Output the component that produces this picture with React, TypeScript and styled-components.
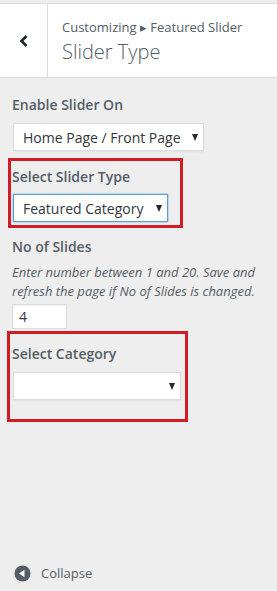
import styled, { createGlobalStyle } from "styled-components";

const GlobalStyle = createGlobalStyle`
  html, body {
    margin: 0;
    padding: 0;
    background: #eeeeee;
  }
  body {
    font-family: "Open Sans", "Liberation Sans", sans-serif;
    color: #555d66;
  }
`;

const Panel = styled.div`
  min-height: 100vh;
  display: flex;
  flex-direction: column;
  box-sizing: border-box;
  padding-top: 3px;
`;

const Header = styled.header`
  display: flex;
  height: 73px;
  background: #fff;
  border-top: 1px solid #dddddd;
  border-bottom: 1px solid #dddddd;
`;

const BackButton = styled.button`
  width: 48px;
  flex: none;
  display: flex;
  align-items: center;
  justify-content: center;
  padding: 0;
  background: #fff;
  border: none;
  border-right: 1px solid #dddddd;
  color: #23282d;
`;

const TitleBlock = styled.div`
  padding: 11px 0 0 14px;
`;

const Crumb = styled.div`
  font-size: 13px;
  line-height: 24px;
  color: #555d66;
`;

const Title = styled.h3`
  margin: 0;
  font-size: 20px;
  font-weight: 300;
  line-height: 26px;
  color: #555d66;
`;

const Body = styled.div`
  padding: 16px 12px 0 12px;
  flex: 1;
`;

const Label = styled.div`
  font-size: 14px;
  font-weight: 600;
  line-height: 21px;
  color: #555d66;
`;

const Description = styled.div`
  margin-top: 6px;
  font-size: 13px;
  font-style: italic;
  line-height: 19px;
  color: #555d66;
`;

const SelectBox = styled.div<{ $width: number; $focused?: boolean; $gap?: number }>`
  box-sizing: border-box;
  width: ${({ $width }) => $width}px;
  height: 28px;
  margin: ${({ $gap }) => $gap ?? 8}px 0 0 1px;
  display: flex;
  align-items: center;
  justify-content: space-between;
  padding: 0 5px 0 9px;
  background: #fff;
  border: 1px solid ${({ $focused }) => ($focused ? "#5b9dd9" : "#dddddd")};
  box-shadow: ${({ $focused }) =>
    $focused ? "0 0 2px rgba(30, 140, 190, 0.6)" : "0 1px 2px rgba(0,0,0,0.05)"};
  font-size: 14px;
  color: #32373c;
`;

const Arrow = styled.span`
  width: 0;
  height: 0;
  border-left: 3.5px solid transparent;
  border-right: 3.5px solid transparent;
  border-top: 7px solid #23282d;
`;

const Highlight = styled.div<{ $width: number; $top: number; $pad: string; $shift: number }>`
  box-sizing: border-box;
  width: ${({ $width }) => $width}px;
  margin: ${({ $top }) => $top}px 0 0 ${({ $shift }) => $shift}px;
  padding: ${({ $pad }) => $pad};
  border: 3px solid #d01c22;
`;

const NumberInput = styled.div`
  box-sizing: border-box;
  width: 55px;
  height: 25px;
  margin-top: 3px;
  padding: 0 6px;
  display: flex;
  align-items: center;
  background: #fff;
  border: 1px solid #dddddd;
  box-shadow: inset 0 1px 2px rgba(0, 0, 0, 0.07);
  font-size: 14px;
  color: #32373c;
`;

const Spacer = styled.div<{ $h: number }>`
  height: ${({ $h }) => $h}px;
`;

const Footer = styled.div`
  display: flex;
  align-items: center;
  gap: 10px;
  padding: 0 0 5px 14px;
  height: 26px;
  font-size: 13px;
  color: #555d66;
`;

export default function App() {
  return (
    <>
      <GlobalStyle />
      <Panel>
        <Header>
          <BackButton aria-label="Back">
            <svg width="10" height="14" viewBox="0 0 10 14">
              <polyline
                points="7.5,2 2.5,7 7.5,12"
                fill="none"
                stroke="#1d2327"
                strokeWidth="2.6"
              />
            </svg>
          </BackButton>
          <TitleBlock>
            <Crumb>Customizing ▸ Featured Slider</Crumb>
            <Title>Slider Type</Title>
          </TitleBlock>
        </Header>
        <Body>
          <Label>Enable Slider On</Label>
          <SelectBox $width={191}>
            Home Page / Front Page <Arrow />
          </SelectBox>

          <Highlight $width={175} $top={7} $shift={-4} $pad="5px 0 3px 1px">
            <Label>Select Slider Type</Label>
            <SelectBox $width={155} $focused $gap={7}>
              Featured Category <Arrow />
            </SelectBox>
          </Highlight>

          <Spacer $h={8} />
          <Label>No of Slides</Label>
          <Description>
            Enter number between 1 and 20. Save and refresh the page if No of
            Slides is changed.
          </Description>
          <NumberInput>4</NumberInput>

          <Highlight $width={181} $top={2} $shift={-5} $pad="9px 0 19px 2px">
            <Label>Select Category</Label>
            <SelectBox $width={168} $gap={8}>
              <span />
              <Arrow />
            </SelectBox>
          </Highlight>
        </Body>
        <Footer>
          <svg width="17" height="17" viewBox="0 0 17 17">
            <circle cx="8.5" cy="8.5" r="8" fill="#555d66" />
            <polygon points="5,8.5 10.5,4.8 10.5,12.2" fill="#fff" />
          </svg>
          Collapse
        </Footer>
      </Panel>
    </>
  );
}
